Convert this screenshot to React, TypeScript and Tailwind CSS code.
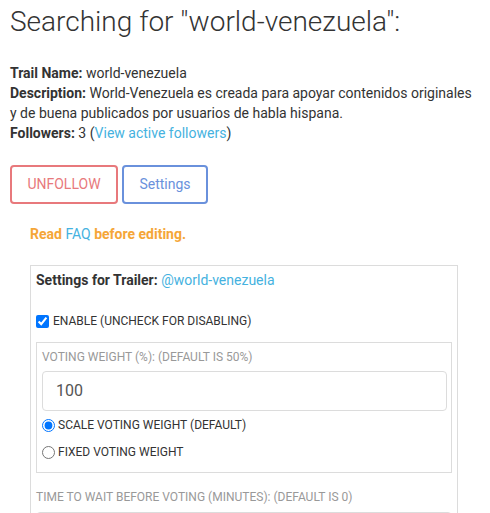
import React from "react";

export default function App() {
  return (
    <div className="bg-white text-[#333] px-[10px] w-[490px] h-[513px] overflow-hidden" style={{ fontFamily: "Roboto, 'Liberation Sans', sans-serif" }}>
      <h1 className="pt-[4px] text-[28px] leading-[35px] font-light text-[#333]">Searching for "world-venezuela":</h1>
      <div className="mt-[24px] text-[14px] leading-[20px] whitespace-nowrap">
        <div><b className="font-bold">Trail Name:</b> world-venezuela</div>
        <div>
          <b className="font-bold">Description:</b> World-Venezuela es creada para apoyar contenidos originales
          <br />y de buena publicados por usuarios de habla hispana.
        </div>
        <div>
          <b className="font-bold">Followers:</b> 3 (<span className="text-[#45b2e0]">View active followers</span>)
        </div>
      </div>
      <div className="mt-[22px] flex gap-[4px]">
        <button className="h-[39px] w-[108px] border-2 border-[#e8797c] rounded-[4px] text-[#e8797c] text-[14px]">UNFOLLOW</button>
        <button className="h-[39px] w-[86px] border-2 border-[#6a91dc] rounded-[4px] text-[#6a91dc] text-[14px]">Settings</button>
      </div>
      <div className="mt-[20px] pl-[20px] text-[14px] leading-[20px] font-bold text-[#f5a638]">
        Read <span className="font-normal text-[#45b2e0]">FAQ</span> before editing.
      </div>
      <div className="mt-[21px] ml-[20px] w-[428px] border border-[#dcdcdc] px-[5px] pt-[4px] pb-[10px]">
        <div className="text-[14px] leading-[20px]">
          <b className="font-bold">Settings for Trailer:</b> <span className="text-[#45b2e0]">@world-venezuela</span>
        </div>
        <label className="mt-[23px] flex items-center gap-[4px] text-[12px] leading-[16px] text-[#333]">
          <input type="checkbox" defaultChecked className="m-0 w-[13px] h-[13px]" />
          <span>ENABLE (UNCHECK FOR DISABLING)</span>
        </label>
        <div className="mt-[13px] border border-[#dcdcdc] px-[5px] pt-[6px] pb-[12px] w-[416px]">
          <div className="text-[12px] leading-[16px] text-[#999]">VOTING WEIGHT (%): (DEFAULT IS 50%)</div>
          <div className="mt-[6px] h-[40px] w-[405px] border border-[#dcdcdc] rounded-[4px] px-[13px] flex items-center text-[16px] text-[#555]">100</div>
          <label className="mt-[6px] flex items-center gap-[3px] text-[12px] leading-[16px]">
            <input type="radio" name="w" defaultChecked className="m-0 w-[13px] h-[13px]" />
            <span>SCALE VOTING WEIGHT (DEFAULT)</span>
          </label>
          <label className="mt-[11px] flex items-center gap-[3px] text-[12px] leading-[16px]">
            <input type="radio" name="w" className="m-0 w-[13px] h-[13px]" />
            <span>FIXED VOTING WEIGHT</span>
          </label>
        </div>
        <div className="mt-[16px] text-[12px] leading-[16px] text-[#999]">TIME TO WAIT BEFORE VOTING (MINUTES): (DEFAULT IS 0)</div>
        <div className="mt-[7px] h-[40px] w-[416px] border border-[#dcdcdc] rounded-[4px]"></div>
      </div>
    </div>
  );
}
